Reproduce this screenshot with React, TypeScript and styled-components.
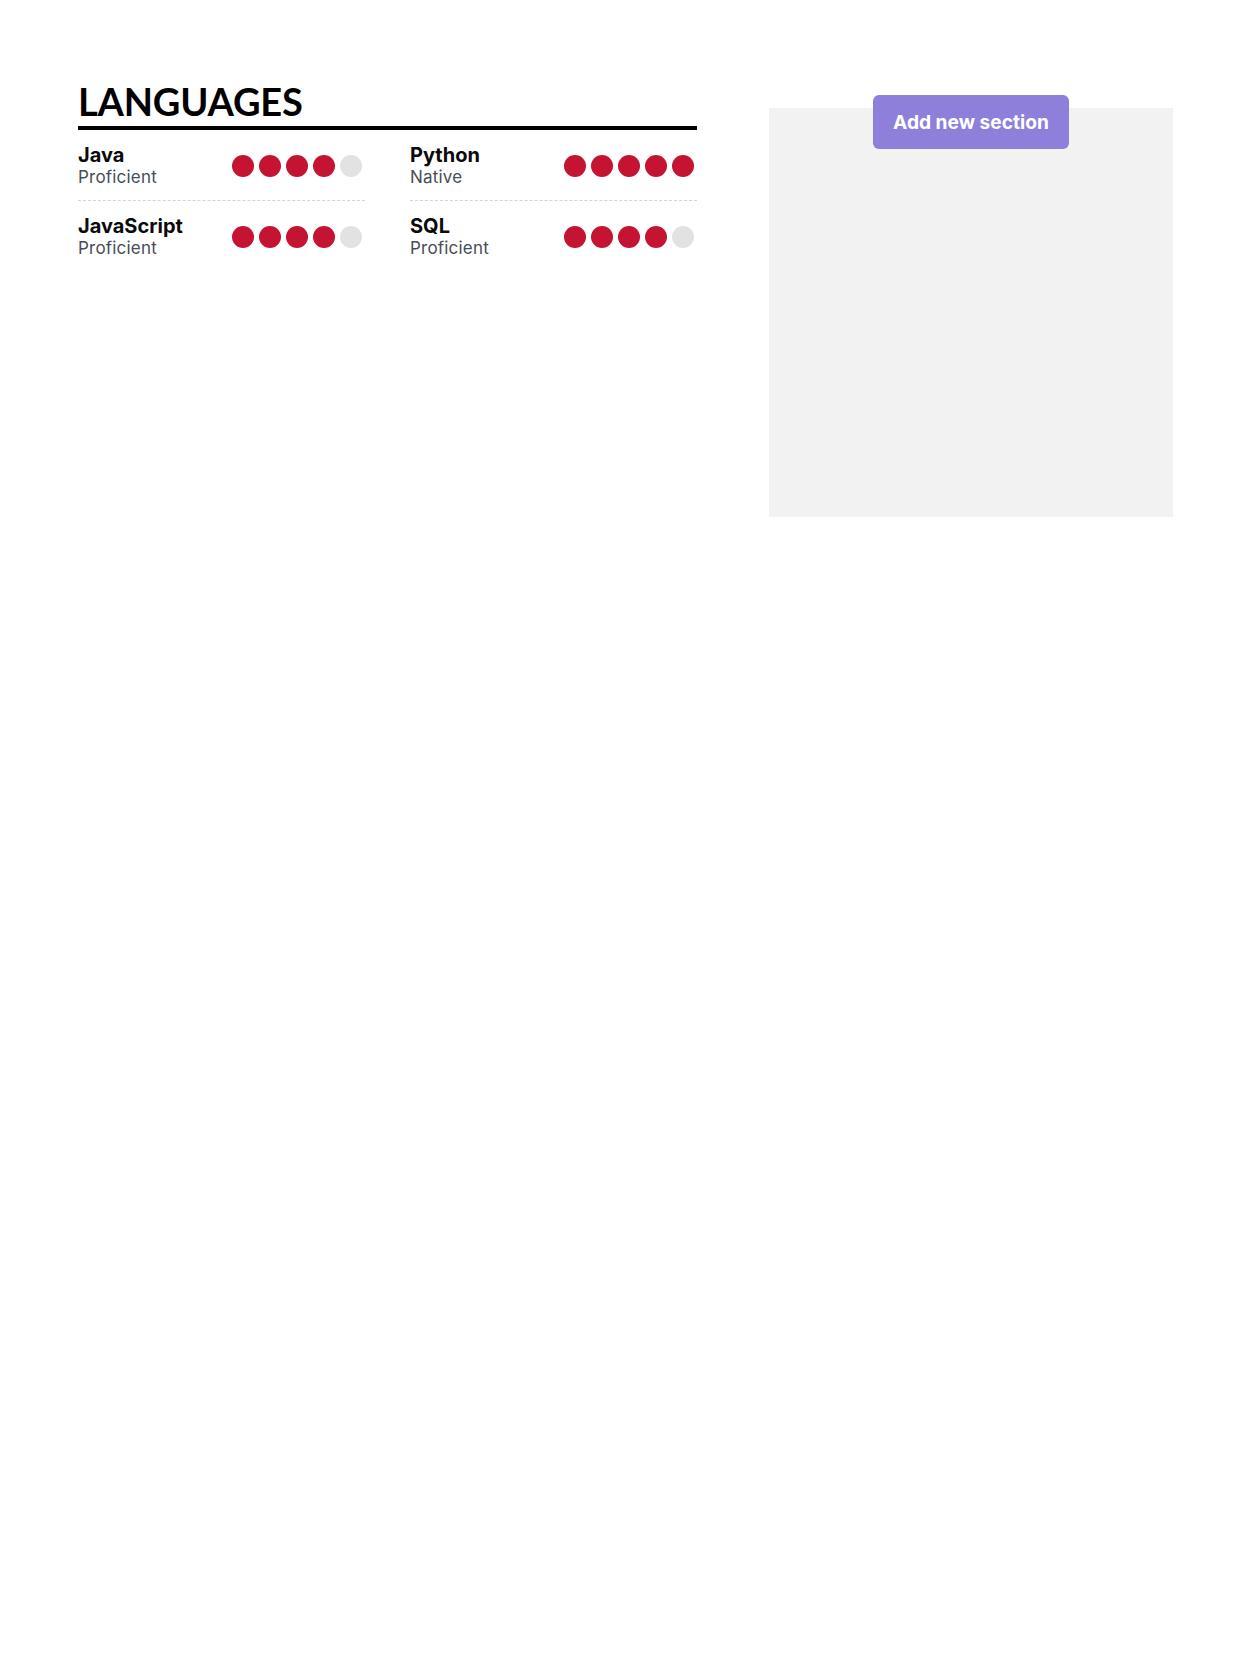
import React from "react";
import styled, { createGlobalStyle } from "styled-components";

const GlobalStyle = createGlobalStyle`
  html, body { margin: 0; padding: 0; background: #ffffff; }
  body { font-family: Inter, "Noto Sans", sans-serif; }
  * { box-sizing: border-box; }
`;

const Page = styled.div`
  display: flex;
  align-items: flex-start;
  gap: 72px;
  padding: 78px 87px 0 78px;
  min-height: 1657px;
`;

const Main = styled.section`
  width: 619px;
  flex: none;
`;

const SectionTitle = styled.h2`
  margin: 0;
  padding: 0 0 2px;
  font-family: Lato, "Open Sans", sans-serif;
  font-weight: 700;
  font-size: 38px;
  line-height: 46px;
  letter-spacing: -0.2px;
  color: #000;
  border-bottom: 4px solid #000;
`;

const Grid = styled.div`
  display: grid;
  grid-template-columns: 287px 287px;
  column-gap: 45px;
`;

const Item = styled.div<{ $last?: boolean }>`
  display: flex;
  align-items: center;
  justify-content: space-between;
  padding: 14px 0 12px;
  border-bottom: ${(p) => (p.$last ? "none" : "1px dashed #d4d4d4")};
`;

const Info = styled.div`
  display: flex;
  flex-direction: column;
`;

const Name = styled.span`
  font-family: Inter, sans-serif;
  font-weight: 700;
  font-size: 20px;
  line-height: 22px;
  color: #0a0a0a;
`;

const Level = styled.span`
  font-family: Inter, sans-serif;
  font-weight: 400;
  font-size: 17px;
  line-height: 22px;
  letter-spacing: 0.2px;
  color: #474d57;
`;

const Dots = styled.div`
  display: flex;
  gap: 5px;
  margin-right: 3px;
`;

const Dot = styled.span<{ $on: boolean }>`
  width: 22px;
  height: 22px;
  border-radius: 50%;
  background: ${(p) => (p.$on ? "#c41432" : "#e2e2e2")};
`;

const Aside = styled.aside`
  width: 404px;
  flex: none;
  margin-top: 30px;
`;

const Canvas = styled.div`
  height: 409px;
  background: #f2f2f2;
  display: flex;
  justify-content: center;
  align-items: flex-start;
`;

const AddButton = styled.button`
  margin-top: -13px;
  height: 54px;
  padding: 0 20px;
  border: none;
  border-radius: 6px;
  background: #8e7fdb;
  color: #ffffff;
  font-family: Inter, sans-serif;
  font-weight: 700;
  font-size: 19.2px;
  cursor: pointer;
`;

const languages = [
  { name: "Java", level: "Proficient", score: 4 },
  { name: "Python", level: "Native", score: 5 },
  { name: "JavaScript", level: "Proficient", score: 4 },
  { name: "SQL", level: "Proficient", score: 4 },
];

export default function App() {
  return (
    <>
      <GlobalStyle />
      <Page>
        <Main>
          <SectionTitle>LANGUAGES</SectionTitle>
          <Grid>
            {languages.map((l, i) => (
              <Item key={l.name} $last={i >= 2}>
                <Info>
                  <Name>{l.name}</Name>
                  <Level>{l.level}</Level>
                </Info>
                <Dots>
                  {[0, 1, 2, 3, 4].map((d) => (
                    <Dot key={d} $on={d < l.score} />
                  ))}
                </Dots>
              </Item>
            ))}
          </Grid>
        </Main>
        <Aside>
          <Canvas>
            <AddButton>Add new section</AddButton>
          </Canvas>
        </Aside>
      </Page>
    </>
  );
}
